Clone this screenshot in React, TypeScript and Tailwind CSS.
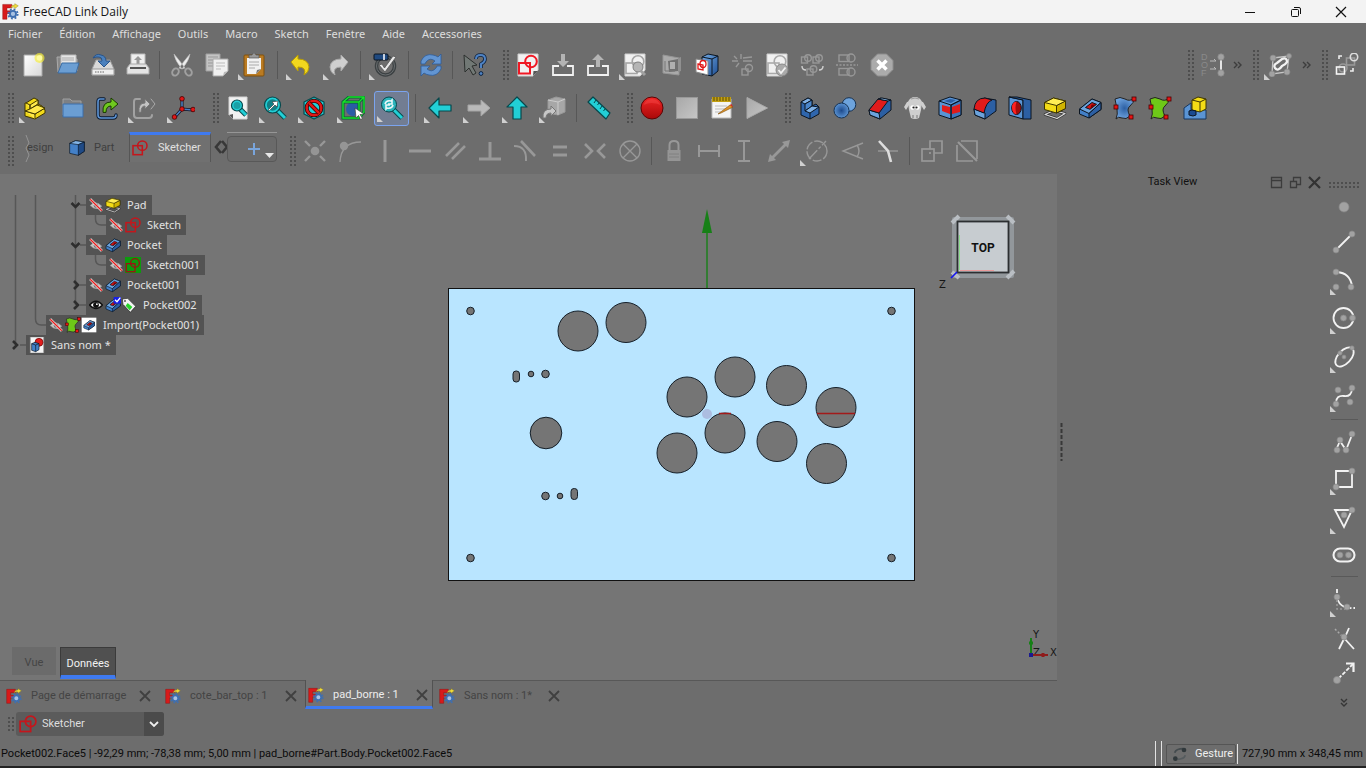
import type { ReactNode } from "react";

const GRIP = "#4e4e4e";

const roundBlue = { fill: "url(#blue)", stroke: "#0b1521", strokeWidth: 1, strokeLinejoin: "round" as const };
const edge = { stroke: "#0b1521", strokeWidth: 1, strokeLinejoin: "round" as const };
const teal = { fill: "#22cfd6", stroke: "#07484c", strokeWidth: 1.2, strokeLinejoin: "round" as const };
const dim = { fill: "none", stroke: "#989898", strokeWidth: 2, strokeLinecap: "butt" as const };
const thin = { fill: "none", stroke: "#989898", strokeWidth: 1.4 };
const white = { fill: "none", stroke: "#f2f2f2", strokeWidth: 1.8 };

function Node({ x, y, r = 3 }: { x: number; y: number; r?: number }) {
  return <circle cx={x} cy={y} r={r} fill="#a2a2a2" stroke="#868686" strokeWidth=".7" />;
}

const sketchShape = (color: string, w = 1.8) => (
  <g fill="none" stroke={color} strokeWidth={w}>
    <rect x="3" y="10" width="11" height="10.5" />
    <circle cx="15" cy="8.500" r="5.800" />
  </g>
);

const sketchLarge = (
  <g fill="none" stroke="#c4161c" strokeWidth="2.300">
    <rect x="1.500" y="8.500" width="14" height="13.500" />
    <circle cx="15.500" cy="8.500" r="7" />
  </g>
);

const pocketShape = (
  <g {...edge}>
    <path d="M1.500 13 14 3l9 3.500v7L11 22l-9.500-4z" fill="#4380c8" />
    <path d="M1.500 13 14 3l9 3.500L11 17.500z" fill="#6ba3dd" />
    <path d="M11 17.500V22l12-8.500v-7z" fill="#2c5fa3" />
    <path d="M7.500 11.500 14 6.500l4.500 1.800-6.500 5z" fill="#d41414" />
    <path d="m12 13.300 1.500-4.500 5-.5z" fill="#7a0000" stroke="none" />
  </g>
);

const padShape = (
  <g strokeLinejoin="round">
    <path d="m2 18.500 9-4 11 3-8 5z" fill="none" stroke="#333" strokeWidth="2.600" />
    <path d="m2 18.500 9-4 11 3-8 5z" fill="none" stroke="#ddd" strokeWidth="1.200" />
    <path d="m1.500 6.500 9-4.500 12 3v7.500l-9 4.500-12-3.500z" fill="#f3dc16" stroke="#3e3600" />
    <path d="m13.500 9.500 9-4.500v7.500l-9 4.500z" fill="#d0b400" stroke="#3e3600" />
    <path d="m1.500 6.500 12 3 9-4.500-12-3z" fill="#ffee55" stroke="#3e3600" />
  </g>
);

const surfaceShape = (fill: string) => (
  <g>
    <path d="M2 3q5-3 10 0t9-1q0 5-4 8t0 10q-4 4-8 2t-6 1q2-5 1-10T2 3z" fill={fill} stroke="#222" />
    <g fill="#e81414" stroke="#4a0000" strokeWidth=".8">
      <rect x="19" y="1" width="4" height="4" />
      <rect x="1" y="9" width="4" height="4" />
      <rect x="16" y="19" width="4" height="4" />
    </g>
  </g>
);

const freecadShape = (
  <g>
    <path d="M1 2h13v5H7v4h5v4H7v8H1z" fill="#d81a1a" stroke="#8a0c0c" strokeWidth=".6" />
    <circle cx="15.500" cy="15.500" r="6.600" fill="none" stroke="#3f6fb0" strokeWidth="2.600" strokeDasharray="2.600 2.580" />
    <circle cx="15.500" cy="15.500" r="4.300" fill="#a9c2e2" stroke="#3f6fb0" strokeWidth="2.600" />
    <path d="M12 7q2-5 6-4V1l5 3-5 4V6q-3-1-6 1z" fill="#f0dc3c" stroke="#8f8120" strokeWidth=".6" />
  </g>
);

const arrowDown = "M10 1h4v7h4l-6 6-6-6h4z";
const arrowUp = "M10 14h4V7h4l-6-6-6 6h4z";
const page = <path d="M2 1h20v16l-5 6H2z" fill="#f1f1f1" stroke="#d0d0d0" />;
const octagon = "M7.500 1h9L23 7.500v9L16.500 23h-9L1 16.500v-9z";

const icons: Record<string, ReactNode> = {
  freecad: freecadShape,
  new: (
    <g>
      <path d="M3 2h18v21H3z" fill="url(#paper)" stroke="#aaa" />
      <circle cx="18.500" cy="5" r="5" fill="#f7ee35" opacity=".65" />
      <circle cx="18.500" cy="5" r="2.800" fill="#fffca0" />
    </g>
  ),
  open: (
    <g>
      <path d="M2 19 1 4h6l2 2h12v12z" fill="#888" stroke="#aaa" />
      <path d="M5 2h15v12H5z" fill="#e6e6e6" stroke="#bbb" />
      <path d="M6 5h12M6 7h12" stroke="#aaa" />
      <path d="m2 20 4-10h17l-3 10z" fill="#6b9ed3" stroke="#3a6ca4" />
    </g>
  ),
  save: (
    <g>
      <path d="m5 7-4 9v6h22v-6l-4-9z" fill="#d9d9d9" stroke="#999" />
      <path d="M1 16h22v6H1z" fill="#eee" stroke="#999" />
      <path d="M4 19h9" stroke="#aaa" strokeDasharray="1.500 1" strokeWidth="2" />
      <path d="M2 5q3-5 8-3 5 1 5 6h4l-6 6-6-6h4q0-4-3-4-3-.5-6 1z" fill="#4a80bd" stroke="#28548a" />
    </g>
  ),
  print: (
    <g>
      <path d="M5 1h14v12H5z" fill="#eee" stroke="#bbb" />
      <path d="m12 3 4 4h-2.500v5h-3V7H8z" fill="#999" />
      <path d="m4 11-3 4v6h22v-6l-3-4z" fill="#e4e4e4" stroke="#aaa" />
      <path d="M4 15h16" stroke="#555" strokeWidth="2" />
    </g>
  ),
  cut: (
    <g>
      <path d="M4 1q6 7 11 14l-3 1Q5 8 4 1zM20 1q-6 7-11 14l3 1q7-8 8-15z" fill="#eee" stroke="#bbb" strokeWidth=".6" />
      <g fill="none" stroke="#a0a0a0" strokeWidth="2">
        <ellipse cx="5.500" cy="19" rx="3" ry="3.800" transform="rotate(35 5.500 19)" />
        <ellipse cx="18.500" cy="19" rx="3" ry="3.800" transform="rotate(-35 18.500 19)" />
      </g>
    </g>
  ),
  copy: (
    <g>
      <path d="M1 1h14v17H1z" fill="#c4c4c4" stroke="#a0a0a0" />
      <path d="M3 4h10M3 7h10M3 10h5M3 13h5" stroke="#999" />
      <path d="M8 6h15v12l-5 5H8z" fill="#f0f0f0" stroke="#aaa" />
      <path d="M11 10h9M11 13h9M11 16h5" stroke="#bbb" />
      <path d="m18 23 1-4 4-1z" fill="#bbb" />
    </g>
  ),
  paste: (
    <g>
      <rect x="2" y="2" width="20" height="21" rx="1" fill="#ba7b22" stroke="#80510d" />
      <path d="M5 5h14v11l-5 5H5z" fill="#f1f1f1" />
      <path d="M7 9h10M7 12h10M7 15h6" stroke="#aaa" />
      <path d="m14 21 1-4 4-1z" fill="#777" />
      <path d="M7 5V2h3l1-2h2l1 2h3v3z" fill="#999" stroke="#555" strokeWidth=".7" />
    </g>
  ),
  undo: <path d="M2 9 9 2v4q10 0 11 8 0 5-5 8 3-8-6-8v4z" fill="#f2d81e" stroke="#b79c04" strokeLinejoin="round" />,
  redo: <path d="m22 9-7-7v4Q5 6 4 14q0 5 5 8-3-8 6-8v4z" fill="#cfcfcf" stroke="#aaa" strokeLinejoin="round" />,
  prefs: (
    <g>
      <circle cx="12.500" cy="13" r="9" fill="none" stroke="#3c4143" strokeWidth="3.500" />
      <circle cx="12.500" cy="13" r="9" fill="none" stroke="#6a6e70" strokeWidth="1" />
      <rect x="1" y="1" width="14" height="6" rx="1" fill="#204a80" stroke="#0b1521" />
      <path d="M11 1v6" stroke="#fff" strokeWidth="1.500" />
      <path d="m6 12 3-1 2.500 4L20 3l3 1-11 15z" fill="#e8e8e8" stroke="#555" strokeWidth=".8" />
    </g>
  ),
  refresh: (
    <g fill="#6295d2" stroke="#2e5c98" strokeWidth=".8" strokeLinejoin="round">
      <path d="M2 11V8q4-8 12-6 3 .5 5 2l3-3v10H13l3-3q-5-4-9 1l-1 2z" />
      <path d="M22 13v3q-4 8-12 6-3-.5-5-2l-3 3V13h9l-3 3q5 4 9-1l1-2z" />
    </g>
  ),
  whatsthis: (
    <g>
      <path d="m1 2 13 10-5 1 4 7-3 2-4-7-4 4z" fill="#717875" stroke="#2c302e" />
      <path d="M13 6q0-4 4.500-4T22 6q0 3-4 5v4" fill="none" stroke="#0d213d" strokeWidth="3.600" />
      <path d="M13 6q0-4 4.500-4T22 6q0 3-4 5v4" fill="none" stroke="#4f83c4" strokeWidth="2" />
      <circle cx="18" cy="20.500" r="1.900" fill="#4f83c4" stroke="#0d213d" />
    </g>
  ),
  sketchNew: (
    <g>
      {page}
      <path d="m17 23 .5-5H22z" fill="#555" />
      {sketchShape("#f01824", 2)}
    </g>
  ),
  importSk: (
    <g>
      <path d={arrowDown} fill="#b4b4b4" />
      <path d="M8 13H2v9h20v-9h-6" {...white} />
    </g>
  ),
  exportSk: (
    <g>
      <path d={arrowUp} fill="#b4b4b4" />
      <path d="M8 13H2v9h20v-9h-6" {...white} />
    </g>
  ),
  viewSk: (
    <g>
      {page}
      {sketchShape("#a5a5a5", 1.600)}
      <circle cx="15" cy="14" r="5" fill="#b5b5b5" stroke="#808080" />
      <path d="m18 18 4 4" stroke="#a0a0a0" strokeWidth="3" />
    </g>
  ),
  section: (
    <g>
      <path d="M3 2 19 5v17L3 20z" fill="#aaa" stroke="#969696" />
      <path d="m8 8 10-2v12l-9 1z" fill="#707070" />
      <path d="M10 9h5v7h-5z" fill="#b0b0b0" />
      <path d="M5 8v10h10" fill="none" stroke="#777" />
      <path d="m18 5 3-1v14l-3 1z" fill="#909090" />
    </g>
  ),
  mapSk: (
    <g>
      <path d="m7 4 6-3 10 2v15l-6 5-10-2z" {...roundBlue} />
      <path d="m7 4 10 2v17m0-17 6-3" fill="none" {...edge} />
      <path d="m1 6 12 2v14L1 19z" fill="#fff" stroke="#888" />
      <g fill="none" stroke="#e21818" strokeWidth="1.300">
        <path d="m3 11 5 1v5l-5-1z" />
        <ellipse cx="8" cy="11" rx="3" ry="3.500" />
      </g>
    </g>
  ),
  reorient: (
    <g>
      <path d="M11 1v5M8 8H2M13 5l9-1M13 8h9M9 10l-3 4M4 3l3 3" {...thin} />
      <rect x="12" y="16" width="6" height="6" {...thin} />
      <circle cx="19" cy="15" r="3.500" {...thin} />
    </g>
  ),
  validate: (
    <g>
      {page}
      {sketchShape("#aaa", 1.600)}
      <circle cx="17" cy="17" r="6" fill="#aaa" stroke="#8a8a8a" />
      <path d="m13.500 17 2.500 3 4.500-5.500" {...white} />
    </g>
  ),
  merge: (
    <g {...thin}>
      <rect x="1.500" y="4" width="6" height="6" />
      <circle cx="8" cy="5" r="3.300" />
      <rect x="13" y="4" width="6" height="6" />
      <circle cx="19" cy="5" r="3.300" />
      <rect x="7" y="16" width="6" height="6" />
      <circle cx="13.500" cy="16" r="3.300" />
      <path d="M2 13q0 4 4 4m17-4q0 4-4 4" stroke="#d0d0d0" />
    </g>
  ),
  mirror: (
    <g {...thin}>
      <rect x="4" y="2" width="10" height="6.500" />
      <circle cx="16" cy="5" r="4" />
      <path d="M1 12h22" strokeDasharray="2 1.500" />
      <rect x="4" y="15.500" width="10" height="6.500" />
      <circle cx="16" cy="19" r="4" />
    </g>
  ),
  stop: (
    <g>
      <path d={octagon} fill="#ababab" stroke="#8d8d8d" />
      <path d="m7.500 7.500 9 9m0-9-9 9" stroke="#fff" strokeWidth="3.500" />
    </g>
  ),
  dof: (
    <g>
      <g fill="#8a8a8a" fontFamily="Liberation Sans" fontSize="9">
        <text x="0" y="7">D</text>
        <text x="0" y="15">O</text>
        <text x="0" y="23">F</text>
      </g>
      <path d="M9 8h6m-2-2 2 2M9 16h6m-2-2 2 2" stroke="#bbb" fill="none" />
      <path d="M20 5v15" {...white} />
      <Node x={20} y={4} r={3.200} />
      <Node x={20} y={20} r={3.200} />
    </g>
  ),
  polyEdit: (
    <g>
      <path d="m5 5 16-2-2 16-15 2z" stroke="#c5c5c5" strokeWidth="1.300" fill="none" />
      <path d="M7 15q-2-3 2-5l5-4q5-2 5 3-1 2-5 4-4 6-7 2z" {...white} strokeWidth={2.300} />
      <Node x={5} y={5} />
      <Node x={21} y={3} r={2.500} />
      <Node x={19} y={19} />
      <Node x={4} y={21} />
    </g>
  ),
  virtual: (
    <g fill="none" strokeWidth="1.600">
      <rect x="11.500" y="5" width="8" height="7" stroke="#999" />
      <circle cx="19" cy="4" r="3.700" stroke="#ddd" />
      <circle cx="8" cy="15" r="4" stroke="#999" />
      <rect x="1.500" y="14" width="8" height="7" stroke="#f5f5f5" />
      <path d="M4 6V3h3m8 15h3v-3" stroke="#eee" />
    </g>
  ),
  part: (
    <g fill="#f2d91a" stroke="#403700" strokeLinejoin="round">
      <path d="m3 7 8-5 4 2v4l4 2 3 4v3l-10 6-10-3V7z" />
      <path d="m7 9 8-5v4l-8 5zM3 7l4 2v4M2 15l10 3v5M12 18l10-6" fill="#ffe94b" />
      <path d="m7 13 7-4 8 3-10 6-10-3 5-2z" fill="#ffe94b" />
    </g>
  ),
  folder: (
    <g>
      <path d="M3 19V3h7l2 2h9v14z" fill="#7d8084" stroke="#a1a1a1" />
      <path d="M3 8h20v13H3z" fill="#6b9ed3" stroke="#3c6fab" />
    </g>
  ),
  link: (
    <g fill="none" strokeLinecap="round">
      <path d="M9 3H5Q3 3 3 6v13q0 3 3 3h12q3 0 3-3" stroke="#0b1a30" strokeWidth="3.400" />
      <path d="M9 3H5Q3 3 3 6v13q0 3 3 3h12q3 0 3-3" stroke="#5f95d5" strokeWidth="1.600" />
      <path d="M8 16q-1-10 8-10V2l7 6-7 6v-4q-5 0-5 6z" fill="#6fc81e" stroke="#183a00" strokeLinejoin="round" />
    </g>
  ),
  linkGray: (
    <g fill="none" strokeLinecap="round">
      <path d="M8 3H4Q2 3 2 6v13q0 3 3 3h12q3 0 3-3" stroke="#a2a2a2" strokeWidth="2" />
      <path d="M7 16q-1-9 6-9V3l5 5-5 5v-3q-4 0-4 6z" fill="#c2c2c2" stroke="#777" />
      <path d="m19 3 4 5-4 5" stroke="#aaa" />
    </g>
  ),
  axes: (
    <g>
      <path d="M11 3v12M3 22l8-9 11 1" stroke="#112" strokeWidth="3" fill="none" />
      <path d="M11 3v12M3 22l8-9 11 1" stroke="#4b7fc0" strokeWidth="1.600" fill="none" />
      <g fill="#e01717" stroke="#4a0000" strokeWidth=".8">
        <circle cx="11" cy="2.800" r="2.300" />
        <circle cx="11" cy="13" r="2.300" />
        <circle cx="3.500" cy="21" r="2.300" />
        <circle cx="22" cy="13.500" r="2.300" />
      </g>
    </g>
  ),
  fitAll: (
    <g>
      <path d="M3 1h18v22H7l-4-4z" fill="#f1f1f1" stroke="#d5d5d5" />
      <path d="m3 19 4-1v5z" fill="#555" />
      <path d="m14 13 6 6" stroke="#07484c" strokeWidth="5" />
      <path d="m14 13 6 6" stroke="#22cfd6" strokeWidth="3" />
      <circle cx="11" cy="9.500" r="5.500" {...teal} />
      <circle cx="11" cy="9.500" r="3.500" fill="#19a0a6" />
    </g>
  ),
  fitSel: (
    <g>
      <path d="m14 14 8 8" stroke="#07484c" strokeWidth="5" />
      <path d="m14 14 8 8" stroke="#22cfd6" strokeWidth="3" />
      <circle cx="9.500" cy="9" r="8" {...teal} />
      <circle cx="9.500" cy="9" r="5.700" fill="#127e84" />
      <path d="m5 14 6-6-2-2 6-1-1 6-2-2-6 6z" fill="#fff" stroke="#333" strokeWidth=".6" />
    </g>
  ),
  drawStyle: (
    <g>
      <path d="M12 1 22 6v12l-10 5L2 18V6z" {...teal} />
      <circle cx="12" cy="12" r="7.300" fill="none" stroke="#300" strokeWidth="4" />
      <circle cx="12" cy="12" r="7.300" fill="none" stroke="#e01717" strokeWidth="2.500" />
      <path d="m7 7 10 10" stroke="#300" strokeWidth="4" />
      <path d="m7 7 10 10" stroke="#e01717" strokeWidth="2.500" />
    </g>
  ),
  bbox: (
    <g>
      <circle cx="12" cy="13" r="7" fill="#2b5ca5" />
      <path d="M2 6 8 1h15v15l-5 6H2zM2 6h16v16M18 6l5-5" fill="none" stroke="#063" strokeWidth="3" />
      <path d="M2 6 8 1h15v15l-5 6H2zM2 6h16v16M18 6l5-5" fill="none" stroke="#18e02a" strokeWidth="1.400" />
      <path d="m14 12 9 6-4 .5 2.500 4-2 1-2-4-2.500 2.500z" fill="#fff" stroke="#444" strokeWidth=".7" />
    </g>
  ),
  syncView: (
    <g>
      <path d="m13 13 9 9" stroke="#07484c" strokeWidth="5" />
      <path d="m13 13 9 9" stroke="#22cfd6" strokeWidth="3" />
      <circle cx="9" cy="8.500" r="7.500" fill="#2cb4bc" stroke="#07484c" />
      <path d="M5 8q1-4 6-3l1-1v4H8m5 1q-1 4-6 3l-1 1V9h4" stroke="#e8f8f8" strokeWidth="1.600" fill="none" />
    </g>
  ),
  back: <path d="M1 12 11 2v7h12v6H11v7z" {...teal} />,
  forward: <path d="M23 12 14 4v5H1v6h13v5z" fill="#b9b9b9" stroke="#a5a5a5" />,
  up: <path d="m12 1 10 10h-6v12H8V11H2z" {...teal} />,
  linkGo: (
    <g stroke="#999" strokeLinejoin="round">
      <path d="m6 4 8-3 9 2v13l-7 3-10-2z" fill="#a7a7a7" />
      <path d="m6 4 10 2v13M16 6l7-3" fill="none" stroke="#ccc" />
      <path d="M1 22q-1-9 8-9v-3l5 5-5 5v-3q-5 0-5 5z" fill="#c7c7c7" stroke="#777" />
    </g>
  ),
  measure: (
    <g>
      <path d="m6 1 17 16-4 6L1 6z" {...teal} />
      <path d="m9 4-2 3m5 0-1.500 2M15 10l-2 3m5 0-1.500 2" stroke="#07484c" />
    </g>
  ),
  record: (
    <g>
      <circle cx="12" cy="12" r="11" fill="url(#red)" stroke="#5a0505" />
      <path d="M3.500 9q8-4 17 0Q18 3 12 3T3.500 9z" fill="#ff5c5c" opacity=".3" />
    </g>
  ),
  square: <rect x="1.500" y="1.500" width="21" height="21" fill="url(#gray)" stroke="#999" />,
  macro: (
    <g>
      <path d="M2 3h19v19H2z" fill="#f4f4f4" stroke="#bbb" />
      <path d="M2 1h19v5H2z" fill="#c3a013" />
      <path d="M4 1v4m3-4v4m3-4v4m3-4v4m3-4v4m3-4v4" stroke="#5a4a05" />
      <path d="M5 10h12M5 13h12M5 16h6" stroke="#bbb" />
      <path d="m8 18 12-9 3 2-12 6z" fill="#e0952a" stroke="#7d4c07" strokeWidth=".6" />
      <path d="m20 9 3 2-1.500-3z" fill="#d22" />
    </g>
  ),
  play: <path d="m2 1.500 20.500 10.500L2 22.500z" fill="url(#gray)" stroke="#aaa" />,
  body: (
    <g {...edge}>
      <path d="m3 6 7-4 4 2v6l4-2 3 3v7l-9 5-9-4z" fill="#2f66ad" />
      <path d="m3 6 7-4 4 2-7 4z" fill="#7fb0e4" />
      <path d="m7 8 7-4v6l-7 5z" fill="#4a86cb" />
      <path d="m7 15 7-5 7 1-9 6z" fill="#7fb0e4" />
      <path d="M12 17v6" />
    </g>
  ),
  boolean: (
    <g>
      <circle cx="16" cy="8.500" r="6.800" fill="#6da3dc" stroke="#163355" />
      <circle cx="8.500" cy="14.500" r="7.500" fill="url(#ball)" stroke="#163355" />
    </g>
  ),
  chamfer: (
    <g {...edge}>
      <path d="m1 14 11-12 11 2v10l-11 9-10-4z" fill="#2c5fa3" />
      <path d="m1 14 10 3 1 6-10-4z" fill="#6ba3dd" />
      <path d="M1 14 10 3l10 2-9 12z" fill="#e11b1b" />
      <path d="m10 3 4-1 9 2-3 1z" fill="#8ab9e8" />
    </g>
  ),
  sheep: (
    <g>
      <path d="m1 11 3-5 4-1-2 4-3 5z" fill="#cfcfcf" />
      <path d="m23 11-3-5-4-1 2 4 3 5z" fill="#cfcfcf" />
      <path d="M5 6q2-5 7-5t7 5l-1 8-2 8q-4 2-8 0l-2-8z" fill="#cecece" />
      <path d="M8 3q4-2 8 0" stroke="#999" fill="none" />
      <circle cx="9.500" cy="11.500" r="2.200" fill="#fff" />
      <circle cx="14.500" cy="11.500" r="2.200" fill="#fff" />
      <circle cx="10.500" cy="11.500" r="1.100" fill="#222" />
      <circle cx="13.500" cy="11.500" r="1.100" fill="#222" />
      <path d="M10 19v3m4-3v3" stroke="#777" />
    </g>
  ),
  thickness: (
    <g {...edge}>
      <path d="m1 5 11-4 11 3v15l-10 4-12-4z" fill="#5a94d4" />
      <path d="M13 9v14l10-4V4z" fill="#3d77bd" />
      <path d="m4 9 8 2v7l-8-3zM14 11l8-3v8l-8 2z" fill="#e11b1b" stroke="none" />
      <path d="m1 5 12 4 10-5" fill="none" />
      <path d="m6 5 6-2 6 1-5 3z" fill="#2c5fa3" stroke="none" />
      <path d="M13 9v14" />
    </g>
  ),
  fillet: (
    <g {...edge}>
      <path d="m1 13 10-11 12 2v11l-11 8-10-4z" fill="#2c5fa3" />
      <path d="m1 13 11 4v6l-10-4z" fill="#6ba3dd" />
      <path d="M1 13Q2 2 12 2l7 2q-6 2-8 13z" fill="#e11b1b" />
    </g>
  ),
  hole: (
    <g {...edge}>
      <path d="M1 1 15 4v19L1 19z" fill="#5a94d4" />
      <path d="m1 1 8 0 14 3v19h-8V4z" fill="#2c5fa3" />
      <ellipse cx="8.500" cy="12" rx="4.800" ry="6.500" fill="#a10c0c" />
      <path d="M8.500 5.500q-5 1-4.500 6.500t4.500 6.500Q6.500 12 8.500 5.500z" fill="#f22" stroke="none" />
    </g>
  ),
  pad: padShape,
  pocket: pocketShape,
  surface: surfaceShape("url(#blueSurf)"),
  surfaceGreen: surfaceShape("#6ec818"),
  binder: (
    <g>
      <path d="M1 12 8 7v9l3-3 12 1v9H1z" fill="#5a94d4" stroke="#16365e" />
      <path d="m9 4 6-3 8 2v10l-6 3-8-2z" fill="#f3dc16" stroke="#3e3600" />
      <path d="m9 4 8 2v10m0-10 6-3" fill="none" stroke="#3e3600" />
      <path d="m6 15 3-1 4 1v4l-3 1-4-1z" fill="#1a4a90" stroke="#0b1521" />
    </g>
  ),
  partBox: (
    <g {...edge}>
      <path d="m1 5 9-4 13 2v14l-9 6-13-3z" fill="#4380c8" />
      <path d="m1 5 13 2 9-4-13-2z" fill="#82b3e6" />
      <path d="M14 7v16l9-6V3z" fill="#1f4a86" />
    </g>
  ),
  sketcher: sketchLarge,
  coincident: (
    <g>
      <path d="m2 2 5 5m10 10 5 5m0-20-5 5M7 17l-5 5" {...dim} strokeWidth={2.400} />
      <circle cx="12" cy="12" r="4.300" fill="#959595" />
    </g>
  ),
  pointOn: (
    <g>
      <path d="M2 23Q3 3 23 3" {...thin} />
      <circle cx="6" cy="7" r="4.200" fill="#959595" />
    </g>
  ),
  vertical: <path d="M12 1v22" {...dim} strokeWidth={3} />,
  horizontal: <path d="M1 12h22" {...dim} strokeWidth={3} />,
  parallel: <path d="M3 17 16 4M9 20 22 7" {...dim} strokeWidth={2.600} />,
  perpendicular: <path d="M12 3v17M1 20h22" {...dim} strokeWidth={3} />,
  tangent: (
    <g>
      <path d="M1 7q13 0 12 15" {...dim} />
      <path d="m8 2 14 15" {...dim} strokeWidth={2.600} />
    </g>
  ),
  equal: <path d="M5 8h14M5 16h14" {...dim} strokeWidth={3} />,
  symmetric: <path d="m2 5 7 7-7 7M22 5l-7 7 7 7" {...dim} strokeWidth={2.600} />,
  block: (
    <g {...thin}>
      <circle cx="12" cy="12" r="10" />
      <path d="m5 5 14 14m0-14L5 19" />
    </g>
  ),
  lock: (
    <g>
      <path d="M7.500 11V6q0-4 4.500-4t4.500 4v5" {...dim} />
      <rect x="5.500" y="11" width="13" height="11" fill="#959595" />
      <path d="M7 15h10M7 18h10" stroke="#808080" />
    </g>
  ),
  distX: <path d="M2 6v12M22 6v12M2 12h20" {...dim} />,
  distY: <path d="M6 2h12M6 22h12M12 2v20" {...dim} />,
  distance: <path d="m1 23 2-8 2 2L17 5l-2-2 8-2-2 8-2-2L7 19l2 2z" fill="#989898" />,
  radius: (
    <g {...thin}>
      <circle cx="13" cy="12" r="10" strokeDasharray="9 2" />
      <path d="M5 20 22 2" strokeDasharray="12 2 3 2" />
    </g>
  ),
  angle: (
    <g {...thin}>
      <path d="M22 4 2 12l20 8" />
      <path d="M16 6q4 6 0 12" />
    </g>
  ),
  snell: (
    <g>
      <path d="M2 12h20" {...thin} />
      <path d="m3 2 9 10 3 11" stroke="#ddd" strokeWidth="2.600" fill="none" />
    </g>
  ),
  internal: (
    <g {...dim} strokeWidth={1.700}>
      <rect x="2" y="10" width="12" height="12" />
      <path d="M10 10V2h12v12h-8" />
      <path d="M10 13v2" />
    </g>
  ),
  reference: (
    <g {...dim} strokeWidth={1.700}>
      <path d="M6 2h16v18M2 6v16h16" />
      <path d="m3 3 19 19" strokeWidth={2.200} />
    </g>
  ),
  point: <Node x={12} y={12} r={5} />,
  line: (
    <g>
      <path d="M5 19 19 5" {...white} />
      <Node x={4} y={20} />
      <Node x={20} y={4} />
    </g>
  ),
  arc: (
    <g>
      <path d="M5 5q13 1 15 14" {...white} />
      <Node x={4} y={5} />
      <Node x={4} y={20} />
      <Node x={19} y={20} />
    </g>
  ),
  circle: (
    <g>
      <circle cx="11.500" cy="12" r="10" {...white} />
      <Node x={11.500} y={12} />
      <Node x={20.500} y={12} />
    </g>
  ),
  ellipse: (
    <g>
      <ellipse cx="12.500" cy="12" rx="11.500" ry="6.500" transform="rotate(-47 12.500 12)" {...white} />
      <Node x={12} y={12} r={2} />
      <Node x={8} y={8} r={2.200} />
      <Node x={20} y={3} r={2.200} />
    </g>
  ),
  bspline: (
    <g>
      <path d="M4 19q0-8 8-7t8-8" {...white} />
      <Node x={6} y={6} />
      <Node x={20} y={4} />
      <Node x={4} y={20} />
      <Node x={18} y={18} />
    </g>
  ),
  polyline: (
    <g>
      <path d="m4 20 4-9 6 9 6-15" {...white} />
      <Node x={5} y={20} />
      <Node x={8} y={10} />
      <Node x={14} y={20} />
      <Node x={20} y={4} />
    </g>
  ),
  rect: (
    <g>
      <path d="M4 4h16v16H4z" {...white} />
      <Node x={20} y={4} />
      <Node x={4} y={20} />
    </g>
  ),
  triangle: (
    <g>
      <path d="M3 4h17l-8 17z" {...white} />
      <Node x={12} y={9} />
      <Node x={20} y={4} />
    </g>
  ),
  slot: (
    <g>
      <rect x="1.500" y="5.500" width="21" height="13" rx="6.500" {...white} strokeWidth={2.100} />
      <Node x={8} y={12} />
      <Node x={16.500} y={12} />
    </g>
  ),
  filletSk: (
    <g>
      <path d="M5 0v7q1 10 11 12h7" {...white} strokeDasharray="4 2 16 2" />
      <path d="M5 11v9h9" stroke="#999" fill="none" strokeDasharray="2 2" strokeWidth="1.600" />
      <Node x={5} y={8} />
      <Node x={15} y={18} />
    </g>
  ),
  trim: (
    <g>
      <path d="m3 3 8 8" stroke="#aaa" strokeWidth="1.500" strokeDasharray="2 2" />
      <path d="m17 2-4 9-6 12m5-11 10 11" {...white} />
      <Node x={12} y={11} />
    </g>
  ),
  extend: (
    <g>
      <path d="M14 2.500h7.500V11" {...white} strokeWidth={2.200} />
      <path d="M21 3 5 19" {...white} strokeDasharray="4 1.500" />
      <Node x={5} y={19} r={3.600} />
    </g>
  ),
  hidden: (
    <g>
      <path d="M2 13q9-10 20 1-10 9-20-1z" fill="#c4c4c4" stroke="#999" />
      <circle cx="12" cy="13" r="4" fill="#777" />
      <path d="m2 2 20 20" stroke="#fff" strokeWidth="4.500" />
      <path d="m2 2 20 20" stroke="#e02020" strokeWidth="2.600" />
    </g>
  ),
  visible: (
    <g>
      <path d="M1 12q11-13 22 0-11 12-22 0z" fill="#fff" stroke="#111" strokeWidth="2.500" />
      <circle cx="12" cy="12" r="5" fill="#111" />
      <circle cx="13.500" cy="10.500" r="1.500" fill="#fff" />
    </g>
  ),
  sketchEdit: (
    <g>
      <rect x="0" y="0" width="24" height="24" fill="#0d9a0d" />
      <g fill="none" stroke="#9c1414" strokeWidth="2">
        <rect x="2" y="10" width="13" height="12" />
        <circle cx="15" cy="9" r="6.500" />
      </g>
    </g>
  ),
  pocketTip: (
    <g>
      {pocketShape}
      <path d="M13 0h11v10H13z" fill="#1720e8" />
      <path d="m15 4 3 3 5-6" stroke="#fff" strokeWidth="2" fill="none" />
    </g>
  ),
  tag: (
    <g>
      <path d="m2 3 8-1 12 12-8 9L3 11z" fill="#f3f3f3" stroke="#222" />
      <path d="m10 9 7 6-4 5-6-7z" fill="#25d42a" />
      <circle cx="6" cy="6" r="1.500" fill="#555" />
    </g>
  ),
  linkPocket: (
    <g>
      <rect x="1" y="1" width="22" height="22" fill="#fff" />
      <g transform="translate(3 3) scale(.75)">{pocketShape}</g>
    </g>
  ),
  document: (
    <g>
      <path d="M2 0h20v24H2z" fill="#f5f5f5" stroke="#999" />
      <circle cx="15" cy="8" r="6" fill="#e01d1d" stroke="#600" />
      <path d="m4 10 5-2 6 2v9l-5 3-6-2z" fill="#4380c8" stroke="#0b1521" />
      <path d="m4 10 6 2v10m0-10 5-2" fill="none" stroke="#0b1521" />
    </g>
  ),
  gesture: (
    <g fill="none" stroke="#444b4e" strokeWidth="2.600">
      <path d="M4 10q2-6 13-6" />
      <path d="M20 14q-2 6-12 6" stroke="#555b5e" />
      <circle cx="18" cy="6" r="3.500" fill="#30383b" stroke="none" />
      <circle cx="5" cy="19" r="3.500" fill="#30383b" stroke="none" />
    </g>
  ),
};

function Icon({ name, className = "size-6" }: { name: string; className?: string }) {
  return (
    <svg viewBox="0 0 24 24" className={`shrink-0 ${className}`} aria-hidden="true">
      {icons[name]}
    </svg>
  );
}

function Gradients() {
  const stops = (a: string, b: string) => (
    <>
      <stop offset="0" stopColor={a} />
      <stop offset="1" stopColor={b} />
    </>
  );
  return (
    <svg className="absolute size-0" aria-hidden="true">
      <defs>
        <linearGradient id="blue" x2="1" y2="1">{stops("#74abe4", "#1f4f94")}</linearGradient>
        <radialGradient id="blueSurf">{stops("#2c5fa3", "#6ba0dc")}</radialGradient>
        <radialGradient id="ball">{stops("#1d4a8c", "#5b93d2")}</radialGradient>
        <linearGradient id="red" x2="0" y2="1">{stops("#f02626", "#a80808")}</linearGradient>
        <linearGradient id="gray" x2="1" y2="1">{stops("#a8a8a8", "#c6c6c6")}</linearGradient>
        <linearGradient id="paper" x2="1" y2="1">{stops("#ffffff", "#d8d8d8")}</linearGradient>
      </defs>
    </svg>
  );
}

function Grip({ first = false }: { first?: boolean }) {
  return (
    <div className={`flex shrink-0 justify-end pr-px ${first ? "w-[15px]" : "w-[18px]"}`}>
      <svg width="6" height="30" aria-hidden="true">
        <path d="M1 0V30M5 0V30" stroke={GRIP} strokeWidth="2" strokeDasharray="2 2" />
      </svg>
    </div>
  );
}

type Tool = { icon: string; label: string; menu?: boolean | "compact"; active?: boolean };

function buttonSize(tool: Tool, vertical: boolean) {
  if (vertical) return tool.menu ? "h-[39px] w-9" : "h-[35px] w-9";
  if (tool.active) return "mx-0.5 h-[35px] w-[35px]";
  if (tool.menu === "compact") return "h-9 w-[37px]";
  return tool.menu ? "h-9 w-[39px]" : "h-9 w-[35px]";
}

function ToolButton({ tool, vertical = false }: { tool: Tool; vertical?: boolean }) {
  return (
    <button
      type="button"
      aria-label={tool.label}
      className={`relative flex shrink-0 items-center justify-center ${buttonSize(tool, vertical)} ${tool.active ? "rounded-[3px] border border-[#7ba4ef] bg-[#727d92]" : ""}`}
    >
      <Icon name={tool.icon} />
      {tool.menu && (
        <svg width="6" height="6" viewBox="0 0 6 6" className={`absolute bottom-[3px] ${tool.active ? "left-0.5" : "left-1"}`} aria-hidden="true">
          <path d="M0 0 6 6H0z" fill="#d0d0d0" />
        </svg>
      )}
    </button>
  );
}

const t = (icon: string, label: string, menu: boolean | "compact" = false, active = false): Tool => ({ icon, label, menu, active });
type Entry = Tool | "sep";

function Tools({ items }: { items: Entry[] }) {
  return (
    <>
      {items.map((it, i) =>
        it === "sep" ? (
          <div key={i} className="flex w-[9px] shrink-0 justify-center">
            <div className="h-7 w-px bg-[#575757]" />
          </div>
        ) : (
          <ToolButton key={i} tool={it} />
        ),
      )}
    </>
  );
}

const fileTools: Entry[] = [
  t("new", "Nouveau"), t("open", "Ouvrir"), t("save", "Enregistrer"), t("print", "Imprimer"), "sep",
  t("cut", "Couper"), t("copy", "Copier"), t("paste", "Coller", true), "sep",
  t("undo", "Annuler", "compact"), t("redo", "Rétablir", "compact"), "sep",
  t("prefs", "Préférences", true), "sep", t("refresh", "Rafraîchir"), "sep", t("whatsthis", "Aide contextuelle"),
];
const sketchTools: Entry[] = [
  t("sketchNew", "Nouvelle esquisse"), t("importSk", "Importer"), t("exportSk", "Exporter"),
  t("viewSk", "Voir l'esquisse", true), t("section", "Vue en coupe"), t("mapSk", "Appliquer une esquisse"),
  t("reorient", "Réorienter"), t("validate", "Valider"), t("merge", "Fusionner"), t("mirror", "Symétrie"), t("stop", "Arrêter"),
];
const structureTools: Entry[] = [
  t("part", "Pièce", true), t("folder", "Groupe"), t("link", "Lien"), t("linkGray", "Actions de lien", true), t("axes", "Repère", true),
];
const viewTools: Entry[] = [
  t("fitAll", "Tout afficher"), t("fitSel", "Afficher la sélection", true), t("drawStyle", "Style", true),
  t("bbox", "Sélection", true), t("syncView", "Synchroniser", true, true), "sep",
  t("back", "Précédent", true), t("forward", "Suivant", true), t("up", "Vue", "compact"), t("linkGo", "Aller au lien", "compact"), "sep",
  t("measure", "Mesurer"),
];
const macroTools: Entry[] = [t("record", "Enregistrer la macro"), t("square", "Arrêter la macro"), t("macro", "Macros"), t("play", "Exécuter")];
const partTools: Entry[] = [
  t("body", "Corps"), t("boolean", "Booléen"), t("chamfer", "Chanfrein"), t("sheep", "Clone"), t("thickness", "Coque"),
  t("fillet", "Congé"), t("hole", "Perçage"), t("pad", "Protrusion"), t("pocket", "Cavité"), t("surface", "Forme liée"),
  t("surfaceGreen", "Sous-forme liée"), t("binder", "Importer une forme"),
];
const constraintTools: Entry[] = [
  t("coincident", "Coïncidence"), t("pointOn", "Point sur objet"), t("vertical", "Vertical"), t("horizontal", "Horizontal"),
  t("parallel", "Parallèle"), t("perpendicular", "Perpendiculaire"), t("tangent", "Tangence"), t("equal", "Égalité"),
  t("symmetric", "Symétrie"), t("block", "Blocage"), "sep",
  t("lock", "Verrou"), t("distX", "Distance horizontale"), t("distY", "Distance verticale"), t("distance", "Distance"),
  t("radius", "Rayon", true), t("angle", "Angle"), t("snell", "Réfraction"), "sep",
  t("internal", "Espace interne"), t("reference", "Référence"),
];
const geometryTools: Entry[] = [
  t("point", "Point"), t("line", "Ligne"), t("arc", "Arc", true), t("circle", "Cercle", true), t("ellipse", "Ellipse", true),
  t("bspline", "B-spline", true), "sep", t("polyline", "Polyligne"), t("rect", "Rectangle", true), t("triangle", "Polygone", true),
  t("slot", "Rainure"), "sep", t("filletSk", "Congé", true), t("trim", "Ajuster"), t("extend", "Prolonger"),
];

function More() {
  return (
    <button type="button" aria-label="Plus d'outils" className="flex w-[15px] shrink-0 items-center justify-center">
      <svg width="10" height="8" aria-hidden="true">
        <path d="m1 1 3 3-3 3m4-6 3 3-3 3" fill="none" stroke="#3d3d3d" strokeWidth="1.400" />
      </svg>
    </button>
  );
}

function TitleBar() {
  return (
    <header className="flex h-[23px] items-center bg-[#f3f3f3] pl-0.5 font-['Open_Sans',sans-serif] text-[12px] text-[#151515]">
      <Icon name="freecad" className="size-[17px]" />
      <h1 className="ml-1 flex-1">FreeCAD Link Daily</h1>
      <div className="flex pr-0.5">
        <button type="button" aria-label="Réduire" className="flex w-[46px] justify-center">
          <svg width="12" height="12"><path d="M1 6.500h10" stroke="#111" /></svg>
        </button>
        <button type="button" aria-label="Restaurer" className="flex w-[45px] justify-center">
          <svg width="12" height="12" fill="none" stroke="#111">
            <rect x="1.500" y="3.500" width="7" height="7" rx="1" />
            <path d="M4 1.500h5q1.500 0 1.500 1.500v5" />
          </svg>
        </button>
        <button type="button" aria-label="Fermer" className="flex w-[46px] justify-center">
          <svg width="12" height="12"><path d="m1 1 10 10M11 1 1 11" stroke="#111" strokeWidth="1.200" /></svg>
        </button>
      </div>
    </header>
  );
}

const menus = ["Fichier", "Édition", "Affichage", "Outils", "Macro", "Sketch", "Fenêtre", "Aide", "Accessories"];

function WorkbenchTabs() {
  return (
    <div className="flex h-[38px] w-[264px] shrink-0 items-start text-[#3f3f3f]">
      <div className="flex h-[31px] w-[42px] items-center pl-2.5">
        <svg width="6" height="28" className="mr-[-6px] shrink-0" aria-hidden="true">
          <path d="m1 1 3 8-3 5 3 7-3 7" fill="none" stroke="#949494" />
        </svg>
        <a href="#design" className="pl-0.5">esign</a>
      </div>
      <a href="#part" className="ml-3 flex h-[31px] w-[60px] items-center gap-[9px]">
        <Icon name="partBox" className="size-4" />
        Part
      </a>
      <a href="#sketcher" aria-current="page" className="flex h-[30px] w-[82px] items-center gap-2.5 border-x border-t-[3px] border-x-[#565656] border-t-[#3f7af0] bg-[#707070] pb-0.5 pl-0.5 text-[#e0e0e0]">
        <Icon name="sketcher" className="size-4" />
        Sketcher
      </a>
      <svg width="13" height="14" className="ml-[3px] mt-2 shrink-0" aria-hidden="true">
        <path d="M7 1 2 7l5 6M8 1l5 6-5 6" fill="none" stroke="#383838" strokeWidth="2.600" />
      </svg>
      <div className="flex border-t border-[#969696] pt-[3px]">
        <button type="button" aria-label="Ajouter" className="flex h-[26px] w-[50px] items-center justify-end gap-1 rounded-[4px] border border-[#585858] bg-[#6a6a6a] pr-0.5">
          <svg width="14" height="14"><path d="M7 1v12M1 7h12" stroke="#79a5dc" strokeWidth="2" /></svg>
          <svg width="9" height="5" className="mt-3"><path d="M0 0h9L4.500 5z" fill="#e8e8e8" /></svg>
        </button>
      </div>
    </div>
  );
}

type Row = { name: string; level: number; icons: string[] };
const rows: Row[] = [
  { name: "Pad", level: 3, icons: ["hidden", "pad"] },
  { name: "Sketch", level: 4, icons: ["hidden", "sketcher"] },
  { name: "Pocket", level: 3, icons: ["hidden", "pocket"] },
  { name: "Sketch001", level: 4, icons: ["hidden", "sketchEdit"] },
  { name: "Pocket001", level: 3, icons: ["hidden", "pocket"] },
  { name: "Pocket002", level: 3, icons: ["visible", "pocketTip", "tag"] },
  { name: "Import(Pocket001)", level: 1, icons: ["hidden", "surfaceGreen", "linkPocket"] },
  { name: "Sans nom *", level: 0, icons: ["document"] },
];
const indent = ["pl-[26px]", "pl-[46px]", "pl-[66px]", "pl-[86px]", "pl-[106px]"];

function Tree() {
  return (
    <div className="relative font-['Noto_Sans',sans-serif]">
      <svg width="110" height="160" className="absolute left-0 top-0" fill="none" aria-hidden="true">
        <path d="M15.500 0v150M35.500 0v124q0 6 6 6h6M75.500 0v110M80 10h6M80 50h6M80 90h6M80 110h6M95.500 20v4q0 6 6 6h5M95.500 60v4q0 6 6 6h5M20 150h6" stroke="#575757" strokeWidth="1.500" />
        <path d="m71.500 8 4 4 4-4M71.500 48l4 4 4-4M74 86l4 4-4 4M74 106l4 4-4 4M13 146l4 4-4 4" stroke="#2e2e2e" strokeWidth="2.600" />
      </svg>
      <ul className="text-[#e2e2e2]">
        {rows.map((r) => (
          <li key={r.name} className={`flex h-5 ${indent[r.level]}`}>
            <div className="relative flex items-center bg-[#535353] px-[3px]">
              {r.icons.map((ic) => (
                <Icon key={ic} name={ic} className={ic === "hidden" || ic === "visible" ? "mr-0.5 size-[14px]" : "size-4"} />
              ))}
              <span className="pl-1.5 pr-0.5 whitespace-nowrap">{r.name}</span>
            </div>
          </li>
        ))}
      </ul>
    </div>
  );
}

const largeHoles = [
  [579, 331], [627, 322.5], [688, 397], [736, 377], [787.5, 385.5],
  [837, 407.5], [726, 433], [678, 453], [778, 441.5], [827.5, 463.5],
];
const screwHoles = [[471.5, 311], [892.5, 311], [471.5, 558], [892.5, 558], [546.5, 374], [546.5, 496]];

function Scene() {
  return (
    <svg viewBox="0 174 1058 506" width="1058" height="506" className="absolute right-0 top-0" aria-hidden="true">
      <path d="M708 230v58" stroke="#178017" strokeWidth="1.400" />
      <path d="M708 209l5 24h-10z" fill="#178017" />
      <rect x="449.500" y="288.500" width="466" height="292" fill="#b9e5ff" stroke="#111" />
      <circle cx="708" cy="414" r="5" fill="#a9b3d8" opacity=".8" />
      <g fill="#757575" stroke="#15202a">
        {largeHoles.map(([x, y]) => <circle key={`${x}-${y}`} cx={x} cy={y} r="20" />)}
        {screwHoles.map(([x, y]) => <circle key={`${x}-${y}`} cx={x} cy={y} r="3.800" />)}
        <circle cx="547" cy="433" r="15.800" />
        <circle cx="532" cy="374" r="2.800" />
        <circle cx="561" cy="496" r="2.800" />
        <rect x="514" y="371" width="6.500" height="11" rx="3" />
        <rect x="572" y="488.500" width="6.500" height="11" rx="3" />
      </g>
      <path d="M818 413.500h38M720 413.500h12" stroke="#a31a1a" strokeWidth="1.300" />

      <rect x="953" y="217" width="62" height="61" rx="2" fill="#92979b" />
      <path d="m953 223 7-7m48 0 7 7m-62 49 7 6m48 0 7-7" stroke="#b9bec3" strokeWidth="4" />
      <rect x="958.500" y="221.500" width="51" height="51" fill="#c7ccd0" stroke="#2c2f31" strokeWidth="1.800" />
      <path d="M960.500 235v35" stroke="#90e090" />
      <path d="M961 270.500h34" stroke="#eb9c9c" />
      <path d="m952 278 6-6" stroke="#1414f0" strokeWidth="1.600" />
      <text x="984" y="252" textAnchor="middle" fontFamily="Liberation Sans Narrow, Roboto, sans-serif" fontSize="12" fontWeight="700" fill="#111">TOP</text>
      <g fontFamily="DejaVu Sans" fontSize="10" fill="#161616">
        <text x="940" y="288">Z</text>
        <text x="1034" y="638">Y</text>
        <text x="1034" y="656">Z</text>
        <text x="1051" y="656">X</text>
      </g>
      <path d="M1032 638v17" stroke="#178017" strokeWidth="2" />
      <path d="M1030 643h4" stroke="#178017" strokeWidth="3" />
      <path d="M1032 655h17" stroke="#8f1c1c" strokeWidth="2" />
      <path d="M1044 653v4" stroke="#8f1c1c" strokeWidth="3" />
      <rect x="1030" y="653" width="4" height="4" fill="#1b1b90" />
    </svg>
  );
}

const docs = [
  { name: "Page de démarrage", width: "w-[159px]" },
  { name: "cote_bar_top : 1", width: "w-[146px]" },
  { name: "pad_borne : 1", width: "w-[128px]", active: true },
  { name: "Sans nom : 1*", width: "w-[135px]" },
];

function DocumentTabs() {
  return (
    <nav className="flex h-[30px] border-t border-[#585858] text-[#444]">
      {docs.map((d) => (
        <div
          key={d.name}
          className={`flex items-center ${d.width} ${d.active ? "-mt-px h-[29px] border-x border-b-[3px] border-x-[#525252] border-b-[#3f7af0] bg-[#737373] pl-0.5 pr-1 pt-[3px] text-[#ededed]" : "h-[29px] pl-1.5 pr-2"}`}
        >
          <Icon name="freecad" className="size-4" />
          <a href="#doc" className="ml-[9px] flex-1 whitespace-nowrap">{d.name}</a>
          <button type="button" aria-label={`Fermer ${d.name}`}>
            <svg width="12" height="12"><path d="m1 1 10 10M11 1 1 11" stroke="#404040" strokeWidth="1.800" /></svg>
          </button>
        </div>
      ))}
    </nav>
  );
}

function TaskPanel() {
  return (
    <aside className="flex w-[265px] shrink-0">
      <div className="flex w-2 items-center justify-center">
        <svg width="3" height="38"><path d="M1.500 0v38" stroke="#383838" strokeWidth="2" strokeDasharray="4 2" /></svg>
      </div>
      <div className="flex h-4 flex-1 items-center text-[11px] text-[#111]">
        <h2 className="flex-1 pl-2.5 text-center">Task View</h2>
        <div className="flex gap-1.5 pr-px">
          <button type="button" aria-label="Réduire le panneau">
            <svg width="13" height="13" fill="none" stroke="#3c3c3c" strokeWidth="1.300"><path d="M1.500 1.500h10v10h-10zM1.500 4.500h10" /></svg>
          </button>
          <button type="button" aria-label="Détacher le panneau">
            <svg width="13" height="13" fill="none" stroke="#3c3c3c" strokeWidth="1.300"><path d="M1.500 5.500h6v6h-6zM4.500 5V1.500h7v7H8" /></svg>
          </button>
          <button type="button" aria-label="Fermer le panneau">
            <svg width="13" height="13"><path d="m1 1 11 11M12 1 1 12" stroke="#333" strokeWidth="2.200" /></svg>
          </button>
        </div>
      </div>
    </aside>
  );
}

function GeometryBar() {
  return (
    <div className="flex w-11 shrink-0 flex-col items-center">
      <div className="flex h-[15px] items-end pb-px">
        <svg width="30" height="6"><path d="M0 1h30M0 5h30" stroke={GRIP} strokeWidth="2" strokeDasharray="2 2" /></svg>
      </div>
      {geometryTools.map((it, i) =>
        it === "sep" ? (
          <div key={i} className="flex h-[9px] w-[27px] shrink-0 items-center">
            <div className="h-px w-full bg-[#595959]" />
          </div>
        ) : (
          <ToolButton key={i} tool={it} vertical />
        ),
      )}
      <button type="button" aria-label="Plus d'outils" className="mt-2">
        <svg width="8" height="10"><path d="m1 1 3 3 3-3M1 5l3 3 3-3" fill="none" stroke="#363636" strokeWidth="1.400" /></svg>
      </button>
    </div>
  );
}

export default function App() {
  return (
    <div className="flex min-h-screen flex-col border-b-2 border-[#232323] bg-[#6d6d6d] font-[Roboto,sans-serif] text-[11px] leading-4">
      <Gradients />
      <TitleBar />
      <nav className="flex h-[21px] items-center gap-[17px] pl-2 font-['Noto_Sans',sans-serif] text-[#dedede]">
        {menus.map((m) => <a key={m} href="#menu">{m}</a>)}
      </nav>
      <div className="flex h-[42px] items-center">
        <Grip first />
        <Tools items={fileTools} />
        <Grip />
        <Tools items={sketchTools} />
        <div className="flex-1" />
        <Grip />
        <Tools items={[t("dof", "Degrés de liberté")]} />
        <More />
        <Grip first />
        <Tools items={[t("polyEdit", "Polygone de contrôle", true)]} />
        <More />
        <Grip first />
        <Tools items={[t("virtual", "Espace virtuel")]} />
        <div className="w-0.5" />
      </div>
      <div className="flex h-11 items-center">
        <Grip first />
        <Tools items={structureTools} />
        <Grip />
        <Tools items={viewTools} />
        <Grip />
        <Tools items={macroTools} />
        <Grip />
        <Tools items={partTools} />
      </div>
      <div className="flex h-11 items-center pb-0.5">
        <Grip first />
        <WorkbenchTabs />
        <Grip />
        <Tools items={constraintTools} />
      </div>

      <div className="flex flex-1">
        <div className="flex min-w-0 flex-1 flex-col">
          <main className="relative flex flex-1 flex-col overflow-hidden bg-[#757575] pt-[21px]">
            <Scene />
            <Tree />
            <div className="flex-1" />
            <div className="relative flex h-[33px] items-start pl-3">
              <button type="button" className="h-7 w-11 bg-[#6b6b6b] pt-1 text-[#454545]">Vue</button>
              <button type="button" className="ml-1 h-8 w-14 border-x border-t border-b-4 border-x-[#3b3b3b] border-t-[#3b3b3b] border-b-[#3f7af0] bg-[#505050] pt-1 text-[#f2f2f2]">Données</button>
            </div>
          </main>
          <DocumentTabs />
        </div>
        <TaskPanel />
        <GeometryBar />
      </div>

      <div className="flex h-7 items-center">
        <div className="flex w-4 justify-end pr-0.5">
          <svg width="6" height="14"><path d="M1 0v14M5 0v14" stroke={GRIP} strokeWidth="2" strokeDasharray="2 2" /></svg>
        </div>
        <div className="relative flex h-6 w-[148px] items-center overflow-hidden rounded-[3px] bg-[#5b5b5b]">
          <select aria-label="Atelier" className="h-6 w-full appearance-none pl-[26px] text-[#dedede] outline-none" defaultValue="Sketcher">
            <option>Sketcher</option>
          </select>
          <Icon name="sketcher" className="pointer-events-none absolute left-[3px] size-[18px]" />
          <div className="pointer-events-none absolute right-0 flex h-6 w-5 items-center justify-center bg-[#4b4b4b]">
            <svg width="10" height="7"><path d="m1 1 4 4 4-4" fill="none" stroke="#eee" strokeWidth="1.800" /></svg>
          </div>
        </div>
      </div>

      <footer className="flex h-7 items-center pl-px pt-[3px] text-[#0b0b0b]">
        <p className="flex-1 whitespace-nowrap">Pocket002.Face5 | -92,29 mm; -78,38 mm; 5,00 mm | pad_borne#Part.Body.Pocket002.Face5</p>
        <div className="h-[25px] w-[7px] border-x border-[#e3e3e3]" />
        <button type="button" className="ml-1 flex h-5 w-[70px] items-center gap-[7px] rounded-[2px] border border-[#555] pl-[5px] text-[#f0f0f0]">
          <Icon name="gesture" className="size-4" />
          Gesture
        </button>
        <div className="ml-px h-5 w-px bg-[#e3e3e3]" />
        <p className="whitespace-nowrap pl-1 pr-[3px]">727,90 mm x 348,45 mm</p>
      </footer>
    </div>
  );
}
